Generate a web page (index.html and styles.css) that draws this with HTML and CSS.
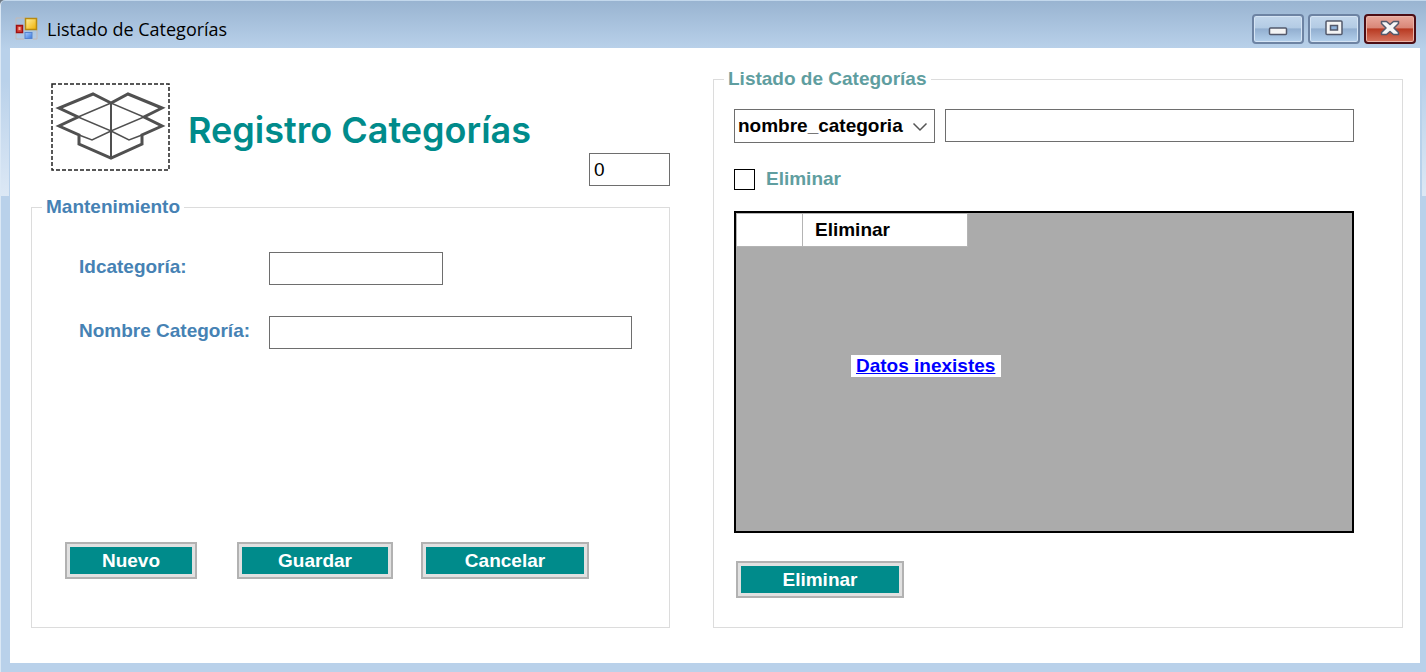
FILE: index.html
```
<!DOCTYPE html>
<html lang="es">
<head>
<meta charset="utf-8">
<title>Listado de Categorías</title>
<link rel="stylesheet" href="styles.css">
</head>
<body>
<div class="window">
  <header class="titlebar">
    <svg class="app-icon" width="24" height="24" viewBox="0 0 24 24" aria-hidden="true">
      <defs>
        <linearGradient id="gold" x1="0" y1="0" x2="1" y2="1"><stop offset="0" stop-color="#fff0a0"/><stop offset="1" stop-color="#f0b000"/></linearGradient>
        <linearGradient id="blue" x1="0" y1="0" x2="1" y2="1"><stop offset="0" stop-color="#a8ccff"/><stop offset="1" stop-color="#3a78dc"/></linearGradient>
      </defs>
      <path d="M1 8V1H10M1 16V22H9M18 22H22V13" fill="none" stroke="#c3b9b4"/>
      <rect x="10.500" y="1.500" width="11" height="11" fill="url(#gold)" stroke="#b88a10" stroke-width="1.500"/>
      <rect x="1.500" y="8.500" width="6" height="7" fill="#d8453a" stroke="#a01010" stroke-width="1.500"/>
      <rect x="3.500" y="10" width="2" height="3" fill="#f4b0a0"/>
      <rect x="10" y="15.500" width="7" height="6" fill="url(#blue)" stroke="#5585d0"/>
    </svg>
    <span class="caption">Listado de Categorías</span>
    <div class="window-buttons">
      <button class="win-btn" type="button" aria-label="Minimizar">
        <svg width="20" height="18" viewBox="0 0 20 18"><rect x="1.500" y="8" width="17" height="6.500" rx="1" fill="#f4f4f4" stroke="#53596b" stroke-width="1.500"/></svg>
      </button>
      <button class="win-btn" type="button" aria-label="Maximizar">
        <svg width="20" height="18" viewBox="0 0 20 18"><rect x="2" y="1" width="16" height="13.500" rx="1" fill="#f4f4f4" stroke="#53596b" stroke-width="1.500"/><rect x="6.500" y="5.500" width="7" height="4.500" fill="#8fb2da" stroke="#53596b" stroke-width="1.500"/></svg>
      </button>
      <button class="win-btn win-close" type="button" aria-label="Cerrar">
        <svg width="20" height="18" viewBox="0 0 20 18"><path d="M1.500 1.500H6.500L10 4.500L13.500 1.500H18.500V3.500L14 8L18.500 12.500V14.500H13.500L10 11.500L6.500 14.500H1.500V12.500L6 8L1.500 3.500Z" fill="#f6f6f6" stroke="#53596b" stroke-width="1.500" stroke-linejoin="round"/></svg>
      </button>
    </div>
  </header>

  <main class="client">
    <section class="column">
      <div class="heading">
        <div class="brand">
          <svg class="box-icon" viewBox="0 0 119 88" aria-hidden="true">
            <rect x="1" y="1" width="117" height="86" fill="none" stroke="#222" stroke-width="1.500" stroke-dasharray="4 2"/>
            <g fill="none" stroke="#505050" stroke-linejoin="miter">
              <path d="M60 20L42 11L8 25L27 34L8 43L28 52V61L60 75L91 61V52L111 43L93 34L111 25L77 11Z" stroke-width="3"/>
              <path d="M60 20V75" stroke-width="2"/>
              <path d="M60 20L27 34L60 48L93 34ZM60 48L41 57L28 52M60 48L78 57L91 52" stroke-width="1.500"/>
            </g>
          </svg>
          <h1 class="title">Registro Categorías</h1>
        </div>
        <input class="field counter" type="text" value="0" aria-label="Indicador">
      </div>

      <fieldset class="group maintenance">
        <legend class="legend">Mantenimiento</legend>
        <form class="group-body form">
          <div class="form-grid">
            <label class="label" for="idcategoria">Idcategoría:</label>
            <input class="field id-field" type="text" id="idcategoria">
            <label class="label" for="nombre">Nombre Categoría:</label>
            <input class="field" type="text" id="nombre">
          </div>
          <div class="actions">
            <button class="btn btn-small" type="button">Nuevo</button>
            <button class="btn" type="button">Guardar</button>
            <button class="btn" type="button">Cancelar</button>
          </div>
        </form>
      </fieldset>
    </section>

    <fieldset class="group listing">
      <legend class="legend">Listado de Categorías</legend>
      <div class="group-body list-body">
        <div class="search">
          <div class="combo">
            <select class="field combo-select" aria-label="Buscar por">
              <option>nombre_categoria</option>
            </select>
            <svg class="chevron" width="16" height="10" viewBox="0 0 16 10" aria-hidden="true"><path d="M1.500 1.500L8 8L14.500 1.500" fill="none" stroke="#555" stroke-width="1.500"/></svg>
          </div>
          <input class="field" type="text" aria-label="Texto a buscar">
        </div>
        <label class="check"><input class="check-box" type="checkbox">Eliminar</label>
        <div class="data-grid">
          <table class="table">
            <thead><tr><th class="row-head"></th><th class="col-head">Eliminar</th></tr></thead>
          </table>
          <a class="empty-link" href="#">Datos inexistes</a>
        </div>
        <button class="btn btn-delete" type="button">Eliminar</button>
      </div>
    </fieldset>
  </main>
</div>
</body>
</html>
```
FILE: styles.css
```
* { box-sizing: border-box; }

body {
  margin: 0;
  background: #6f7a86;
  font: bold 19px/22px "Liberation Sans", Arial, sans-serif;
  color: #000;
}

.window {
  min-height: 100vh;
  display: flex;
  flex-direction: column;
  padding: 0 6px 9px 9px;
  background:
    linear-gradient(#dce8f500 80px, #dce8f5 195px) left top / 8px 195px no-repeat,
    linear-gradient(#dce8f500 80px, #dce8f5 195px) right top / 4px 195px no-repeat,
    linear-gradient(#99b4d1, #b9d1ea 48px);
  border-top: 1px solid #c3d8ec;
  border-left: 1px solid #dbe8f5;
  border-top-left-radius: 5px;
}

.titlebar {
  height: 47px;
  display: flex;
  align-items: center;
  gap: 8px;
  padding: 8px 4px 0 5px;
}

.caption { font: 18px/24px "Open Sans", "Noto Sans", sans-serif; }

.window-buttons {
  display: flex;
  gap: 4px;
  margin-left: auto;
}

.win-btn {
  width: 52px;
  height: 30px;
  display: flex;
  align-items: center;
  justify-content: center;
  padding: 0;
  border: 2px solid #6d83a3;
  border-radius: 4px;
  background: linear-gradient(#c3d7ec 0, #b3cbe4 45%, #92afd0 50%, #b4d0ec 100%);
  box-shadow: inset 0 0 0 1px #d5e4f4;
}

.win-close {
  border-color: #4d0d14;
  background: linear-gradient(#e9a99d 0, #d98778 45%, #b83a22 50%, #d67560 100%);
  box-shadow: inset 0 0 0 1px #eab5aa;
}

.client {
  flex: 1;
  display: grid;
  grid-template-columns: 639fr 690fr;
  gap: 43px;
  padding: 20px 17px 35px 21px;
  background: #fff;
}

.column {
  display: flex;
  flex-direction: column;
}

.heading {
  display: flex;
  justify-content: space-between;
  align-items: flex-end;
  height: 128px;
  padding: 15px 0 10px 20px;
}

.brand {
  display: flex;
  align-items: center;
  align-self: flex-start;
  gap: 18px;
}

.box-icon {
  width: 119px;
  height: 88px;
}

.title {
  margin: 0;
  padding-top: 6px;
  font: 600 36px/40px Inter, "Liberation Sans", sans-serif;
  color: #008b8b;
}

.field {
  width: 100%;
  height: 33px;
  padding: 0 4px;
  border: 1px solid #6e6e6e;
  border-radius: 0;
  background: #fff;
  font: inherit;
  color: #000;
}

.counter {
  width: 81px;
  font-weight: normal;
}

.group {
  min-width: 0;
  margin: 0;
  padding: 0;
  display: flex;
  flex-direction: column;
  border: 1px solid #dcdcdc;
}

.maintenance {
  flex: 1;
  color: #4682b4;
}

.listing { color: #5f9ea0; }

.legend {
  margin-left: 10px;
  padding: 0 4px;
}

.group-body {
  flex: 1;
  display: flex;
  flex-direction: column;
}

.form { padding: 34px 37px 48px 33px; }

.form-grid {
  display: grid;
  grid-template-columns: 190px 1fr;
  row-gap: 31px;
  align-items: center;
  padding-left: 14px;
}

.label { padding-bottom: 4px; }

.id-field { width: 174px; }

.actions {
  display: grid;
  grid-template-columns: 144px 156px 168px;
  gap: 28px;
  margin-top: auto;
}

.btn {
  height: 37px;
  padding: 0;
  border: 2px solid #b2b2b2;
  background: #008b8b;
  box-shadow: inset 0 0 0 3px #e1e1e1;
  font: inherit;
  color: #fff;
}

.btn-small { width: 132px; }

.list-body { padding: 19px 48px 29px 20px; }

.search {
  display: flex;
  gap: 10px;
}

.combo {
  flex: none;
  position: relative;
  width: 201px;
}

.combo-select {
  height: 34px;
  padding: 0 30px 0 3px;
  appearance: none;
}

.chevron {
  position: absolute;
  right: 7px;
  top: 13px;
}

.check {
  display: flex;
  align-items: center;
  align-self: flex-start;
  gap: 11px;
  margin: 25px 0 21px;
}

.check-box {
  width: 21px;
  height: 21px;
  margin: 0;
  appearance: none;
  border: 1px solid #000;
  background: #fff;
}

.check-box:checked { background: #008b8b; }

.data-grid {
  flex: 1;
  position: relative;
  min-height: 200px;
  border: 2px solid #000;
  background: #ababab;
}

.table {
  border-collapse: collapse;
  background: #fff;
  color: #000;
}

.table th {
  height: 33px;
  padding: 0 12px;
  border: 1px solid #b4b4b4;
  text-align: left;
}

.row-head { width: 66px; }

.col-head { width: 165px; }

.empty-link {
  position: absolute;
  left: 115px;
  top: 142px;
  padding: 0 6px 0 5px;
  background: #fff;
  color: #00f;
}

.btn-delete {
  align-self: flex-start;
  width: 168px;
  margin: 28px 0 0 2px;
}
```
